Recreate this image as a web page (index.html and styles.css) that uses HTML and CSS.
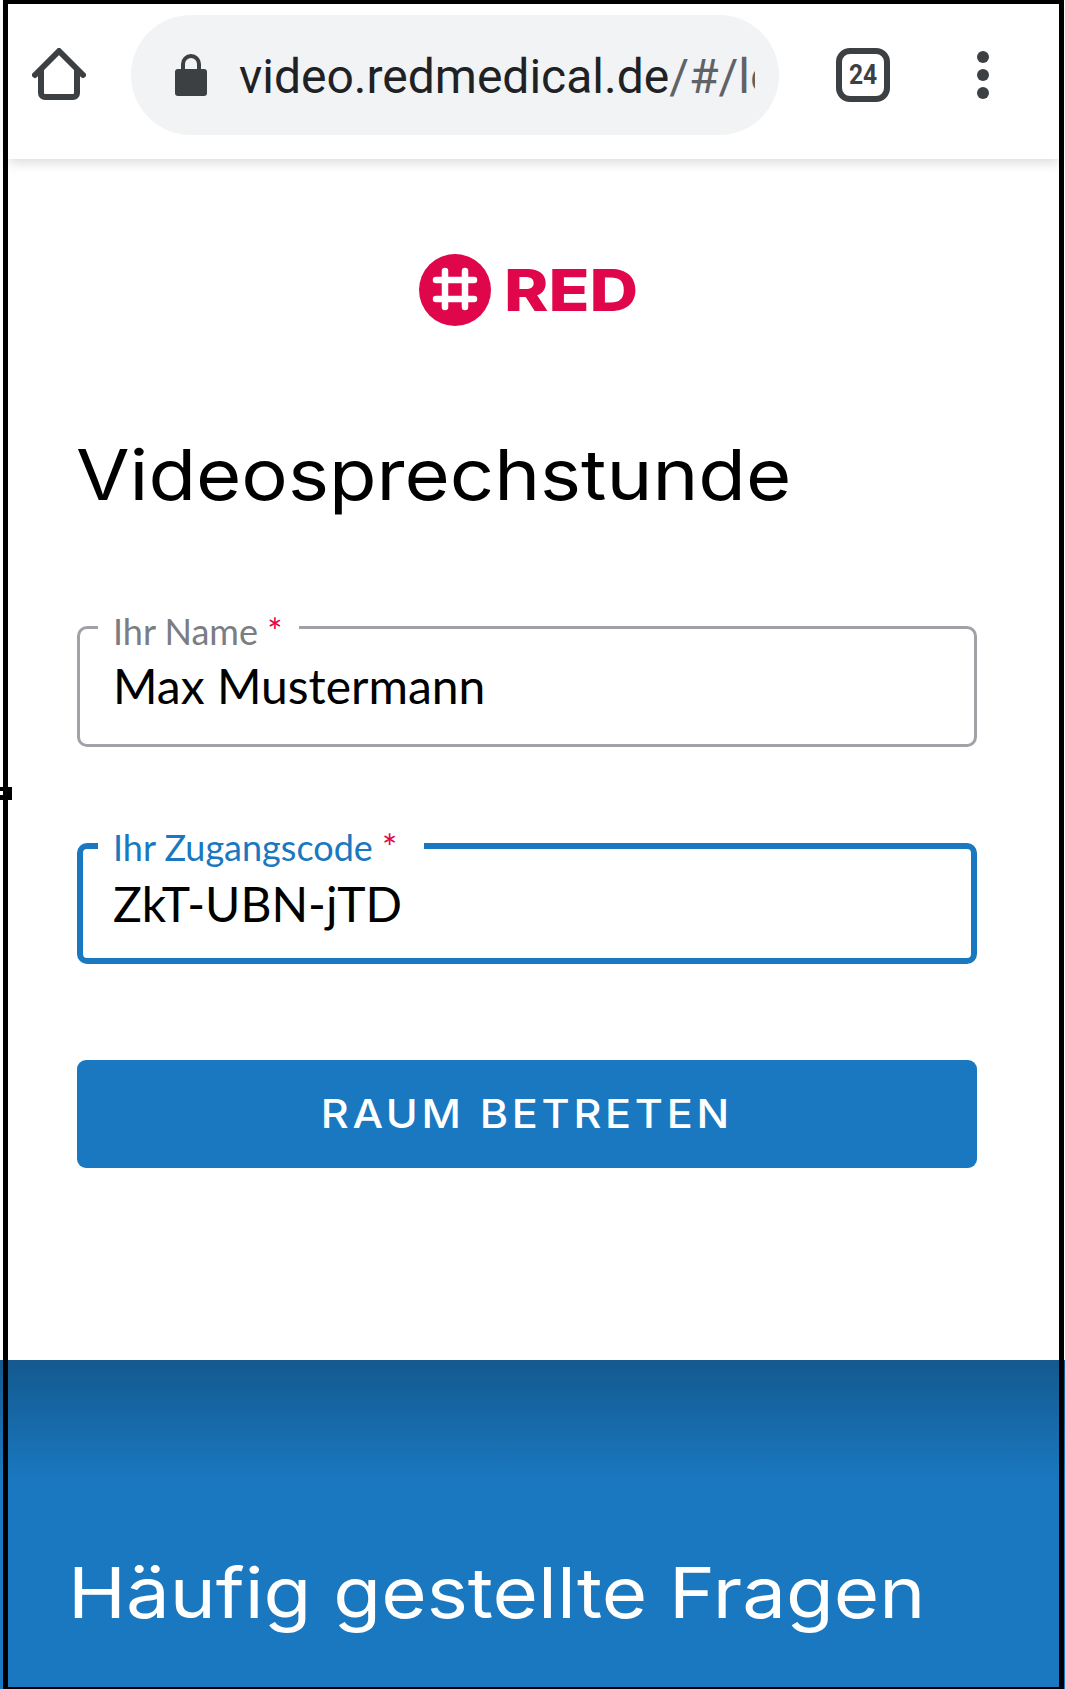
FILE: index.html
```html
<!DOCTYPE html>
<html lang="de">
<head>
<meta charset="utf-8">
<title>Videosprechstunde</title>
<link rel="stylesheet" href="styles.css">
</head>
<body>
<div class="screen">
  <header class="toolbar">
    <svg class="icon-home" viewBox="0 0 54 54" aria-hidden="true">
      <path d="M9 22V45a4 4 0 0 0 4 4H41a4 4 0 0 0 4-4V22M3 27L27 3L51 27" fill="none" stroke="#3c4043" stroke-width="6" stroke-linecap="round" stroke-linejoin="round"/>
    </svg>
    <div class="omnibox">
      <svg class="icon-lock" viewBox="0 0 32 42" aria-hidden="true">
        <path d="M8 17V10a8 8 0 0 1 16 0V17" fill="none" stroke="#3c4043" stroke-width="4"/>
        <rect x="0" y="15" width="32" height="27" rx="3" fill="#3c4043"/>
      </svg>
      <div class="url"><span class="url-host">video.redmedical.de</span><span class="url-path">/#/login</span></div>
    </div>
    <div class="tabs"><span class="tabs-count">24</span></div>
    <div class="menu"><i></i><i></i><i></i></div>
  </header>

  <main class="content">
    <div class="logo">
      <svg class="logo-mark" viewBox="0 0 72 72" aria-hidden="true">
        <circle cx="36" cy="36" r="36" fill="#e0064b"/>
        <path d="M26 17V53M46 17V53M17 26H55M17 45H55" fill="none" stroke="#fff" stroke-width="6.5" stroke-linecap="round"/>
      </svg>
      <span class="logo-text">RED</span>
    </div>
    <h1 class="title">Videosprechstunde</h1>
    <fieldset class="field">
      <legend class="field-label">Ihr Name <span class="req">*</span></legend>
      <div class="field-value">Max Mustermann</div>
    </fieldset>
    <fieldset class="field field-active">
      <legend class="field-label">Ihr Zugangscode <span class="req">*</span></legend>
      <div class="field-value">ZkT-UBN-jTD</div>
    </fieldset>
    <button class="submit" type="button"><span class="submit-text">RAUM BETRETEN</span></button>
  </main>

  <section class="faq">
    <h2 class="faq-title">Häufig gestellte Fragen</h2>
  </section>

  <div class="frame"></div>
  <div class="tick"></div>
</div>
</body>
</html>
```

FILE: styles.css
```css
* { box-sizing: border-box; }
html, body { margin: 0; padding: 0; background: #fff; }
.screen {
  position: relative;
  width: 1065px;
  height: 1689px;
  overflow: hidden;
  display: flex;
  flex-direction: column;
  background: #fff;
}
.toolbar {
  flex: 0 0 159px;
  display: flex;
  align-items: center;
  margin: 0 6px 0 8px;
  padding: 0 0 9px 24px;
  position: relative;
  background: #fff;
  box-shadow: 0 3px 12px rgba(0,0,0,.16);
}
.icon-home { width: 54px; height: 54px; flex: none; }
.omnibox {
  flex: none;
  width: 648px;
  height: 120px;
  margin-left: 45px;
  padding-left: 44px;
  border-radius: 60px;
  background: #f1f3f4;
  display: flex;
  align-items: center;
}
.icon-lock { width: 32px; height: 42px; flex: none; }
.url {
  margin-left: 32px;
  padding-top: 3px;
  width: 516px;
  overflow: hidden;
  white-space: nowrap;
  font: 400 48px/60px Roboto, sans-serif;
}
.url-host { color: #202124; }
.url-path { color: #5f6368; }
.tabs {
  flex: none;
  width: 54px;
  height: 54px;
  margin-left: 57px;
  border: 6px solid #3c4043;
  border-radius: 14px;
  display: flex;
  align-items: center;
  justify-content: center;
}
.tabs-count {
  font: 700 28px/1 Roboto, sans-serif;
  color: #3c4043;
  transform: scaleX(.88);
}
.menu {
  flex: none;
  margin-left: 87px;
  display: flex;
  flex-direction: column;
  gap: 6px;
}
.menu i { display: block; width: 12px; height: 12px; border-radius: 50%; background: #3c4043; }

.content {
  flex: 1;
  min-height: 0;
  padding: 95px 88px 0 77px;
  display: flex;
  flex-direction: column;
}
.content > * { flex: none; }
.logo {
  display: flex;
  align-items: center;
  gap: 13px;
  padding-left: 342px;
  height: 72px;
}
.logo-mark { width: 72px; height: 72px; flex: none; }
.logo-text {
  font: 800 58px/72px Inter, sans-serif;
  color: #e0064b;
  transform: scaleX(1.16);
  transform-origin: left center;
}
.title {
  margin: 99px 0 0 -1px;
  font: 400 70px/100px Inter, sans-serif;
  color: #000;
  white-space: nowrap;
  transform: scaleX(1.11);
  transform-origin: left center;
}
.field {
  min-width: 0;
  height: 146px;
  margin: 76px 0 0;
  padding: 0;
  border: 3px solid #a0a2a8;
  border-radius: 10px;
}
.field-label {
  margin-left: 18px;
  padding: 8px 17px 0 15px;
  font: 400 36px/44px Lato, sans-serif;
  color: #7b7d82;
}
.req { color: #e0064b; }
.field-value {
  padding-left: 33px;
  margin-top: 3px;
  font: 400 48px/60px Lato, sans-serif;
  color: #000;
}
.field-active {
  height: 141px;
  margin-top: 76px;
  border: 6px solid #1a78c0;
}
.field-active .field-label { margin-left: 15px; padding-top: 2px; padding-right: 27px; color: #1a78c0; }
.field-active .field-value { padding-left: 30px; margin-top: 5px; }
.submit {
  margin-top: 96px;
  height: 108px;
  border: 0;
  border-radius: 9px;
  background: #1a78c0;
  color: #fff;
  font: 500 40px/1 Inter, sans-serif;
  letter-spacing: 3.4px;
}
.submit-text { display: inline-block; transform: scaleX(1.08); }
.faq {
  flex: 0 0 329px;
  padding: 0 0 0 68px;
  background: linear-gradient(#14598f 0, #1a78c0 120px);
}
.faq-title {
  margin: 0;
  padding-top: 183px;
  font: 400 70px/100px Inter, sans-serif;
  color: #fff;
  white-space: nowrap;
  transform: scaleX(1.114);
  transform-origin: left center;
}
.frame {
  position: absolute;
  left: 3px;
  top: 0;
  width: 1061px;
  height: 1689px;
  border: solid #000;
  border-width: 4px 5px 2px 5px;
  pointer-events: none;
}
.tick {
  position: absolute;
  left: 0;
  top: 787px;
  width: 12px;
  height: 13px;
  background: #000;
}
.tick::after {
  content: "";
  position: absolute;
  left: 0;
  top: 4px;
  width: 3px;
  height: 4px;
  background: #fff;
}
```
